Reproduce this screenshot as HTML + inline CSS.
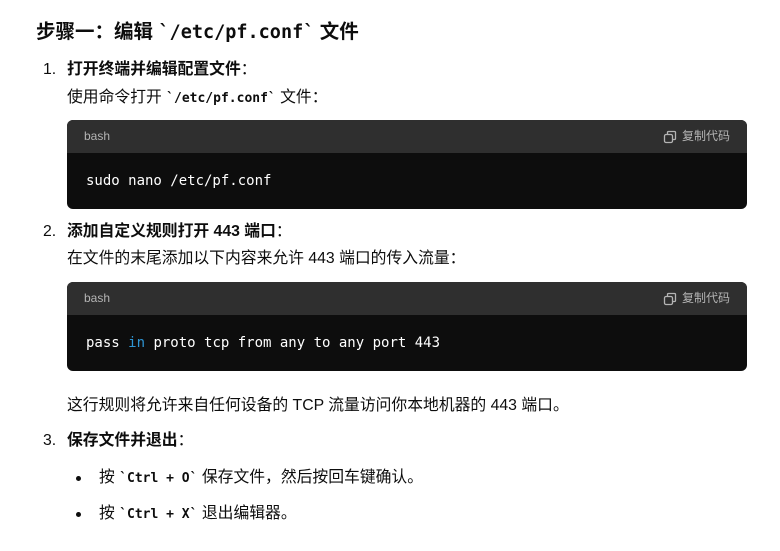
<!DOCTYPE html>
<html><head><meta charset="utf-8"><style>
body{margin:0;background:#fff;width:780px;height:551px;overflow:hidden;font-family:"Liberation Sans","Noto Sans CJK SC",sans-serif;color:#0d0d0d;position:relative}
.a{position:absolute;white-space:nowrap;line-height:20px}
.m{font-family:"DejaVu Sans Mono","Liberation Mono",monospace;font-weight:bold;font-size:13px}
h1{position:absolute;left:36px;top:19px;margin:0;font-size:19.5px;font-weight:bold;line-height:26px}
.t{font-size:15.8px}
.cb{position:absolute;left:67px;width:680px;height:89px;border-radius:6px;background:#0d0d0d;overflow:hidden}
.hd{height:33px;background:#2f2f2f;color:#b4b4b4;font-size:12px;line-height:33px;padding-left:17px;position:relative}
.cp{position:absolute;right:17px;top:0;display:flex;align-items:center;gap:5px}
.code{color:#fff;font-family:"DejaVu Sans Mono","Liberation Mono",monospace;font-size:14px;padding-left:19px;line-height:56px}
.dot{position:absolute;width:5px;height:5px;border-radius:50%;background:#0d0d0d}
</style></head><body>
<h1>步骤一：编辑 <span class="m" style="font-size:18.5px">`/etc/pf.conf`</span> 文件</h1>
<div class="a t" style="left:43px;top:60px">1.</div>
<div class="a t" style="left:67px;top:60px"><b>打开终端并编辑配置文件</b>：</div>
<div class="a t" style="left:67px;top:88px">使用命令打开 <span class="m">`/etc/pf.conf`</span> 文件：</div>
<div class="cb" style="top:120px"><div class="hd">bash<span class="cp"><svg width="14" height="14" viewBox="0 0 14 14" fill="none" stroke="#b4b4b4" stroke-width="1.3"><rect x="1.5" y="4.5" width="8" height="8" rx="1.5"/><path d="M4.5 4.5V2.5a1 1 0 0 1 1-1h6a1 1 0 0 1 1 1v6a1 1 0 0 1-1 1H9.5"/></svg>复制代码</span></div><div class="code">sudo nano /etc/pf.conf</div></div>
<div class="a t" style="left:43px;top:222px">2.</div>
<div class="a t" style="left:67px;top:222px"><b>添加自定义规则打开 443 端口</b>：</div>
<div class="a t" style="left:67px;top:249px">在文件的末尾添加以下内容来允许 443 端口的传入流量：</div>
<div class="cb" style="top:282px"><div class="hd">bash<span class="cp"><svg width="14" height="14" viewBox="0 0 14 14" fill="none" stroke="#b4b4b4" stroke-width="1.3"><rect x="1.5" y="4.5" width="8" height="8" rx="1.5"/><path d="M4.5 4.5V2.5a1 1 0 0 1 1-1h6a1 1 0 0 1 1 1v6a1 1 0 0 1-1 1H9.5"/></svg>复制代码</span></div><div class="code">pass <span style="color:#2e95d3">in</span> proto tcp from any to any port 443</div></div>
<div class="a t" style="left:67px;top:396px">这行规则将允许来自任何设备的 TCP 流量访问你本地机器的 443 端口。</div>
<div class="a t" style="left:43px;top:431px">3.</div>
<div class="a t" style="left:67px;top:431px"><b>保存文件并退出</b>：</div>
<div class="dot" style="left:76px;top:476px"></div>
<div class="a t" style="left:99px;top:468px">按 <span class="m">`Ctrl + O`</span> 保存文件，然后按回车键确认。</div>
<div class="dot" style="left:76px;top:512px"></div>
<div class="a t" style="left:99px;top:504px">按 <span class="m">`Ctrl + X`</span> 退出编辑器。</div>
</body></html>
